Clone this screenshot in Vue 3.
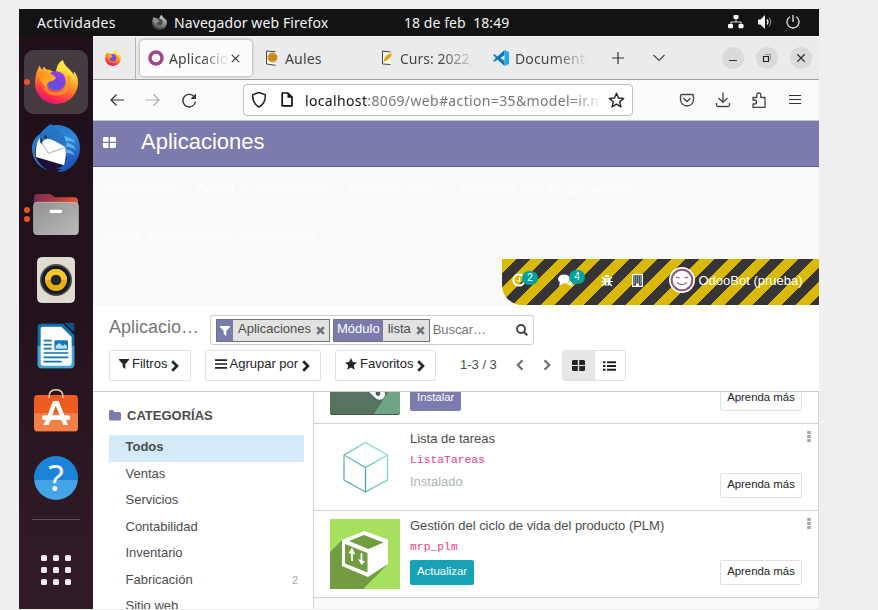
<script setup>
const menuRows = [
  ['Aplicaciones', 'Tienda de aplicaciones', 'Actualizaciones', 'Actualizar lista de aplicaciones'],
  ['Aplicar actualizaciones programadas'],
]
const categories = [
  { name: 'Todos', active: true },
  { name: 'Ventas' },
  { name: 'Servicios' },
  { name: 'Contabilidad' },
  { name: 'Inventario' },
  { name: 'Fabricación', count: 2 },
  { name: 'Sitio web' },
]
</script>

<template>
  <div class="page">
    <svg class="defs" width="0" height="0" aria-hidden="true">
      <defs>
        <linearGradient id="fxBody" x1="0.75" y1="0.05" x2="0.35" y2="1">
          <stop offset="0" stop-color="#fff44f" />
          <stop offset="0.3" stop-color="#ffc233" />
          <stop offset="0.55" stop-color="#ff7a2c" />
          <stop offset="0.8" stop-color="#ff3547" />
          <stop offset="1" stop-color="#e0107a" />
        </linearGradient>
        <linearGradient id="fxGlobe" x1="0.8" y1="0" x2="0.2" y2="1">
          <stop offset="0" stop-color="#a33be8" />
          <stop offset="0.5" stop-color="#7542e5" />
          <stop offset="1" stop-color="#4a63d8" />
        </linearGradient>
        <linearGradient id="fxHead" x1="0" y1="0" x2="1" y2="0.4">
          <stop offset="0" stop-color="#ff8a1c" />
          <stop offset="1" stop-color="#ffb12a" />
        </linearGradient>
        <linearGradient id="tb" x1="0.2" y1="0" x2="0.8" y2="1">
          <stop offset="0" stop-color="#1c74c8" />
          <stop offset="0.5" stop-color="#2f86dd" />
          <stop offset="1" stop-color="#1b48ae" />
        </linearGradient>
        <linearGradient id="folderBack" x1="0" y1="0" x2="1" y2="0">
          <stop offset="0" stop-color="#7b2b55" />
          <stop offset="1" stop-color="#e6522a" />
        </linearGradient>
        <linearGradient id="folderFront" x1="0" y1="0" x2="1" y2="1">
          <stop offset="0" stop-color="#929292" />
          <stop offset="1" stop-color="#b9b9b9" />
        </linearGradient>
        <linearGradient id="tealEdge" x1="0" y1="1" x2="1" y2="0">
          <stop offset="0" stop-color="#3c9aa6" />
          <stop offset="1" stop-color="#8ee6e6" />
        </linearGradient>
        <symbol id="firefox" viewBox="0 0 127 130">
          <path fill="url(#fxBody)" d="M14 16C6 28 0 46 0 68c0 36 29 62 63 62 37 0 64-28 64-64 0-14-4-24-13-33l1 11C106 27 88 22 82 0 68 8 63 24 63 36c-8-1-14-2-19-7-6 0-13 0-17-10-3 3-4 7-4 10-5-3-8-8-9-13Z" />
          <path fill="#ffe23e" opacity=".8" d="M82 0c3 22 30 27 36 62-8-10-14-22-28-27-8-4-18-4-27 1 0-12 5-28 19-36Z" />
          <circle cx="62" cy="62" r="29" fill="url(#fxGlobe)" />
          <path fill="url(#fxHead)" d="M5 45c9-10 21-14 33-8 5 2 14 4 24 16-6 10-17 8-23 14-4 4-5 10-4 16C24 76 18 58 5 45Z" />
          <path fill="none" stroke="#ff9a25" stroke-width="9" stroke-linecap="round" opacity=".75" d="M99 50c8 23-5 49-34 51-14 0-27-5-34-17" />
        </symbol>
      </defs>
    </svg>

    <div class="screen">
      <header class="topbar">
        <span class="activities">Actividades</span>
        <svg class="gray-fox" width="15" height="15"><use href="#firefox" /></svg>
        <span class="appname">Navegador web Firefox</span>
        <span class="clock">18 de feb&nbsp; 18:49</span>
        <div class="tray">
          <svg width="16" height="14" viewBox="0 0 16 14"><path d="M3 9V7h10v2M8 4v3" fill="none" stroke="#ddd" /><rect x="5.500" y="0" width="5" height="4" rx="1" fill="#fff" /><rect x="0" y="9" width="5" height="4.300" rx="1" fill="#fff" /><rect x="10.500" y="9" width="5" height="4.300" rx="1" fill="#fff" /></svg>
          <svg width="16" height="14" viewBox="0 0 16 14"><path d="M1 4.500h2.500L8 0v14L3.500 9.500H1Z" fill="#f4f4f4" /><path d="M10 4.500q2 2.500 0 5" fill="none" stroke="#eee" stroke-width="1.300" /><path d="M12 2.500q3.400 4.500 0 9" fill="none" stroke="#888" stroke-width="1.100" /></svg>
          <svg width="14" height="14" viewBox="0 0 14 14"><path d="M4 1.800a6 6 0 1 0 6 0M7 0v7" fill="none" stroke="#e6e6e6" stroke-width="1.300" /></svg>
        </div>
      </header>

      <div class="body">
        <nav class="dock">
          <div class="slot">
            <i class="dots"><b></b></i>
            <div class="tile"><svg width="43" height="44"><use href="#firefox" /></svg></div>
          </div>
          <div class="slot">
            <svg width="48" height="48" viewBox="0 0 144 144">
              <path fill="#1d1034" d="M10 96q14 36 56 46l40-12V90Z" />
              <path fill="url(#tb)" d="M24 30C38 12 46 8 56 0l6 4c46-6 82 26 82 68 0 36-26 66-56 72l-14-2 16-6-20-4C96 132 102 116 104 98L26 42C10 62 6 80 10 98q12 28 42 42C20 132 0 104 0 72 0 54 10 38 24 30Z" />
              <path fill="#fff" d="M22 42q10-8 24-2l54 28q4 32-4 56L12 99Q8 70 22 42Z" />
              <path d="M25 50l24 38 52-18" fill="none" stroke="#9c9c9c" stroke-width="2.500" />
              <path fill="#2872c2" d="M24 34c12-14 34-18 54-12 16 6 26 24 24 48C86 58 64 44 44 45 34 47 30 54 29 62 23 54 22 44 24 34Z" />
              <path fill="#7fd0f6" opacity=".65" d="M96 36c18 5 28 10 35 20-12-6-20-6-30-6ZM103 56c18 4 26 10 30 22-9-7-18-9-29-10ZM104 76c14 3 21 10 24 19-8-6-15-8-25-8Z" />
              <circle cx="40" cy="39" r="5" fill="#28384f" />
              <path fill="#263a55" d="M27 39l-4 18 10-7Z" />
            </svg>
          </div>
          <div class="slot">
            <i class="dots"><b></b><b></b></i>
            <svg width="46" height="42" viewBox="0 0 138 126">
              <path fill="url(#folderBack)" d="M3 14Q3 3 14 3h36q6 0 10 6 3 4 9 4h54q12 0 12 12v50H3Z" />
              <rect x="2" y="28" width="134" height="97" rx="11" fill="url(#folderFront)" stroke="#cfcfcf" stroke-width="2" />
              <rect x="50" y="50" width="37" height="10" rx="4" fill="#fff" />
            </svg>
          </div>
          <div class="slot">
            <svg width="38" height="46" viewBox="0 0 114 138">
              <rect x="2" y="2" width="110" height="134" rx="11" fill="#e0dbcf" stroke="#f3f0e8" stroke-width="3" />
              <circle cx="57" cy="69" r="48" fill="#494e52" />
              <circle cx="57" cy="69" r="43" fill="#171b20" />
              <circle cx="57" cy="69" r="33" fill="#e9ad13" />
              <path d="M57 36a33 33 0 0 1 33 33H24a33 33 0 0 1 33-33" fill="#f7c72c" />
              <circle cx="57" cy="69" r="16" fill="#24282b" />
            </svg>
          </div>
          <div class="slot">
            <svg width="38" height="46" viewBox="0 0 114 138">
              <path fill="#0e70ad" d="M14 2h64l34 34v88q0 12-12 12H14Q2 136 2 124V14Q2 2 14 2Z" />
              <path fill="#41a3d8" d="M2 69h110v55q0 12-12 12H14Q2 136 2 124Z" />
              <path fill="#fff" d="M17 11h56l31 31v78q0 8-8 8H19q-8 0-8-8V18q0-7 6-7Z" />
              <path fill="#0a5688" d="M82 0h30v28Z" />
              <path d="M20 53h24M20 65h24M20 77h24M20 90h74M20 103h74M20 116h54" stroke="#1172b0" stroke-width="5" />
              <rect x="52" y="52" width="41" height="29" rx="4" fill="#1679b6" />
              <path fill="#b5e1f5" d="M56 77V68l11-8 10 9 7-5 6 5v8Z" />
            </svg>
          </div>
          <div class="slot bag">
            <svg width="46" height="44" viewBox="0 0 138 132">
              <rect x="3" y="21" width="132" height="109" rx="11" fill="#ef5c20" />
              <path fill="#f38047" d="M3 76h132v43q0 11-11 11H14Q3 130 3 119Z" />
              <path d="M48 30v-4q0-21 21-21t21 21v4" fill="none" stroke="#f2d6a1" stroke-width="4.500" />
              <path fill="#fff" fill-rule="evenodd" d="M60 39h17l17 43h9q8 0 8 7t-8 7h-4l6 15H91l-6-15H53l-6 15H31l8-15h-4q-8 0-8-7t8-7h9Zm8 14L58 82h22Z" />
            </svg>
          </div>
          <div class="slot">
            <div class="help">?</div>
          </div>
          <div class="dock-line"></div>
          <div class="dock-grid"><i v-for="n in 9" :key="n"></i></div>
        </nav>

        <main class="browser">
          <div class="tabs">
            <div class="pinned"><svg width="16" height="16"><use href="#firefox" /></svg></div>
            <div class="tab active">
              <svg width="16" height="16" viewBox="0 0 16 16"><circle cx="8" cy="8" r="6" fill="none" stroke="#a24689" stroke-width="3.500" /></svg>
              <span class="fade t1">Aplicaciones</span>
              <svg class="close" width="9" height="9" viewBox="0 0 9 9"><path d="M.8.8l7.400 7.400M8.200.8L.8 8.200" stroke="#333" stroke-width="1.100" /></svg>
            </div>
            <div class="tab aules">
              <svg width="14" height="16" viewBox="0 0 14 16"><path d="M1.500 1l9 .7M1.500 1v13l9 1.300" fill="#fff" stroke="#444" /><circle cx="7.500" cy="7.500" r="5" fill="#d49a24" /><path d="M4 6h7M4 9h7" stroke="#845813" stroke-dasharray="1.500 1" /></svg>
              <span>Aules</span>
            </div>
            <div class="tab curs">
              <svg width="14" height="16" viewBox="0 0 14 16"><path d="M9.500 2L1.500 1v13l8 .5" fill="#fff" stroke="#444" /><path d="M3 11q0-7 8-8-1 7-8 8Z" fill="#f3b619" /><path d="M2.500 12L9 5" stroke="#c87c12" /></svg>
              <span class="fade t2">Curs: 2022_</span>
            </div>
            <div class="tab docs">
              <svg width="16" height="16" viewBox="0 0 16 16"><path d="M11.500 0L4.500 6.500 1.500 4.200 0 5l3 3-3 3 1.500.8 3-2.300 7 6.500V11L7.500 8l4-3Z" fill="#0779bd" /><path d="M11.500 0L16 2v12l-4.500 2Z" fill="#27a5ee" /></svg>
              <span class="fade t3">Documenta</span>
            </div>
            <svg class="plus" width="12" height="12" viewBox="0 0 12 12"><path d="M6 0v12M0 6h12" stroke="#333" stroke-width="1.200" /></svg>
            <svg class="down" width="12" height="8" viewBox="0 0 12 8"><path d="M.5 1L6 6.500 11.500 1" fill="none" stroke="#444" stroke-width="1.200" /></svg>
            <div class="win">
              <i><svg width="10" height="10"><path d="M1 7.500h8" stroke="#333" /></svg></i>
              <i><svg width="10" height="10"><path d="M1.500 3.500h5v5h-5Z" fill="none" stroke="#222" stroke-width="1.200" /><path d="M3 1.500h5.500V7" fill="none" stroke="#999" /></svg></i>
              <i><svg width="10" height="10"><path d="M1.300 1.300l7.400 7.400M8.700 1.300L1.300 8.700" stroke="#333" stroke-width="1.300" /></svg></i>
            </div>
          </div>

          <div class="toolbar">
            <div class="navicons">
              <svg width="16" height="16" viewBox="0 0 16 16"><path d="M15 8H2M7.500 2.500L2 8l5.500 5.500" fill="none" stroke="#333" stroke-width="1.200" /></svg>
              <svg width="16" height="16" viewBox="0 0 16 16"><path d="M1 8h13M8.500 2.500L14 8l-5.500 5.500" fill="none" stroke="#aaa" stroke-width="1.200" /></svg>
              <svg width="16" height="16" viewBox="0 0 16 16"><path d="M14.500 9.500A6.300 6.300 0 1 1 12.500 4" fill="none" stroke="#333" stroke-width="1.400" /><path d="M15 1.500v5.500H9.500Z" fill="#333" /></svg>
            </div>
            <div class="url">
              <svg width="16" height="18" viewBox="0 0 16 18"><path d="M8 1.500l6.300 2.200q.5 8.500-6.300 12.500Q1.200 12.200 1.700 3.700Z" fill="none" stroke="#222" stroke-width="1.500" stroke-linejoin="round" /></svg>
              <svg width="14" height="16" viewBox="0 0 14 16"><path d="M2.200 1h5.600L12 5.200v8.600H2.200Z" fill="none" stroke="#111" stroke-width="1.700" stroke-linejoin="round" /><path d="M7.500 1v4.800H12Z" fill="#111" /></svg>
              <span class="fade address"><b>localhost</b>:8069/web#action=35&amp;model=ir.module</span>
              <svg width="17" height="17" viewBox="0 0 17 17"><path d="M8.500 1.300l2 4.700 5.200.4-4 3.400 1.300 5.100-4.500-2.800L4 14.900l1.300-5.100-4-3.400L6.500 6Z" fill="none" stroke="#222" stroke-width="1.400" stroke-linejoin="round" /></svg>
            </div>
            <div class="tools">
              <svg width="16" height="16" viewBox="0 0 16 16"><path d="M3 2.500h10q1.500 0 1.500 1.500v3.500a6.500 6.500 0 0 1-13 0V4Q1.500 2.500 3 2.500Z" fill="none" stroke="#444" stroke-width="1.300" /><path d="M4.500 6.200L8 9.500l3.500-3.300" fill="none" stroke="#444" stroke-width="1.500" /></svg>
              <svg width="16" height="16" viewBox="0 0 16 16"><path d="M8 .5V10M3.500 6L8 10.300 12.500 6M1.500 11v2q0 1.500 1.500 1.500h10q1.500 0 1.500-1.500v-2" fill="none" stroke="#444" stroke-width="1.300" /></svg>
              <svg width="16" height="16" viewBox="0 0 16 16"><path d="M2 8V5.500h3.800V3q0-2 2-2t2 2v2.500H14v9.800H2V12h1.500q2 0 2-2t-2-2Z" fill="none" stroke="#444" stroke-width="1.300" stroke-linejoin="round" /></svg>
              <svg width="16" height="16" viewBox="0 0 16 16"><path d="M2 3.500h12M2 7.500h12M2 11.500h12" stroke="#333" stroke-width="1.200" /></svg>
            </div>
          </div>

          <div class="odoo-nav">
            <svg width="13" height="11" viewBox="0 0 13 11"><path fill="#fff" d="M1 0h4.500v4.800H0V1ZM7 0h5l1 1v3.800H7ZM0 6h5.500v5H1l-1-1ZM7 6h6v4l-1 1H7Z" /></svg>
            <span>Aplicaciones</span>
          </div>

          <div class="menus">
            <div v-for="(row, i) in menuRows" :key="i" class="menu-row">
              <span v-for="m in row" :key="m">{{ m }}</span>
            </div>
            <div class="systray">
              <div class="sys clocki">
                <svg width="14" height="14" viewBox="0 0 14 14"><circle cx="7" cy="7" r="5.600" fill="none" stroke="#fff" stroke-width="2" /><path d="M7.500 4v4H4.500" fill="none" stroke="#fff" stroke-width="1.200" /></svg>
                <em>2</em>
              </div>
              <div class="sys chati">
                <svg width="15" height="13" viewBox="0 0 15 13"><ellipse cx="6" cy="5" rx="6" ry="4.600" fill="#fff" /><path fill="#fff" d="M2 8L1 12l5-3ZM8 10q5-1 5.500-6 3 3 0 6l1.500 3-4-2Z" /></svg>
                <em>4</em>
              </div>
              <svg class="bug" width="12" height="13" viewBox="0 0 12 13"><path fill="#fff" d="M3.500 3a2.500 2.500 0 0 1 5 0ZM2.500 4h3v8Q2.500 11.500 2.500 8ZM6.500 4h3v4q0 3.500-3 4Z" /><path d="M0 7.500h12M1 3l2 2M11 3L9 5M1 12l2-2M11 12l-2-2" stroke="#fff" stroke-width="1.200" /></svg>
              <svg class="building" width="11" height="13" viewBox="0 0 11 13"><rect x=".6" y=".6" width="9.800" height="11.800" fill="#49555a" stroke="#fff" stroke-width="1.200" /><path d="M2 3h7M2 5h7M2 7h7M2 9h7" stroke="#bac8ce" stroke-dasharray="1 1" /><path d="M4 12V9.500h3V12" fill="#fff" /></svg>
              <svg class="face" width="26" height="26" viewBox="0 0 26 26"><circle cx="13" cy="13" r="13" fill="#fff" /><circle cx="13" cy="13" r="10.300" fill="#fff" stroke="#875a7b" stroke-width="2" /><path d="M7 11q1.500-1.500 3.500 0M15.500 11q1.500-1.500 3.500 0M8 15.500q5 4 10 0" fill="none" stroke="#875a7b" stroke-width="1.200" /></svg>
              <span class="user">OdooBot (prueba)</span>
            </div>
          </div>

          <section class="control">
            <div class="crow first">
              <h1>Aplicacio…</h1>
              <div class="search">
                <div class="facet">
                  <span class="flabel icon"><svg width="10" height="10" viewBox="0 0 10 10"><path fill="#fff" d="M0 0h10v1L6.300 5v5L3.700 8V5L0 1Z" /></svg></span>
                  <span class="fval">Aplicaciones</span>
                  <svg class="fx" width="9" height="9" viewBox="0 0 9 9"><path d="M1.200 1.200l6.600 6.600M7.800 1.200L1.200 7.800" stroke="#6c757d" stroke-width="2.600" /></svg>
                </div>
                <div class="facet">
                  <span class="flabel">Módulo</span>
                  <span class="fval narrow">lista</span>
                  <svg class="fx" width="9" height="9" viewBox="0 0 9 9"><path d="M1.200 1.200l6.600 6.600M7.800 1.200L1.200 7.800" stroke="#6c757d" stroke-width="2.600" /></svg>
                </div>
                <span class="ph">Buscar…</span>
                <svg class="mag" width="12" height="12" viewBox="0 0 12 12"><circle cx="5" cy="5" r="4" fill="none" stroke="#444" stroke-width="1.900" /><path d="M8 8l3.300 3.300" stroke="#444" stroke-width="2.200" /></svg>
              </div>
            </div>
            <div class="crow second">
              <button class="opt filters"><svg width="10" height="10" viewBox="0 0 10 10"><path fill="#212529" d="M0 0h10v1L6.300 5v5L3.700 8V5L0 1Z" /></svg><span>Filtros</span><svg class="chev" width="8" height="12" viewBox="0 0 8 12"><path d="M1.200 1.200L6 6l-4.800 4.800" fill="none" stroke="#212529" stroke-width="2.700" /></svg></button>
              <button class="opt group"><svg width="12" height="10" viewBox="0 0 12 10"><path d="M0 1.200h12M0 5h12M0 8.800h12" stroke="#212529" stroke-width="1.700" /></svg><span>Agrupar por</span><svg class="chev" width="8" height="12" viewBox="0 0 8 12"><path d="M1.200 1.200L6 6l-4.800 4.800" fill="none" stroke="#212529" stroke-width="2.700" /></svg></button>
              <button class="opt favs"><svg width="12" height="12" viewBox="0 0 12 12"><path fill="#212529" d="M6 0l1.800 4 4.200.4-3.200 2.900.9 4.400L6 9.500l-3.700 2.200.9-4.400L0 4.400 4.200 4Z" /></svg><span>Favoritos</span><svg class="chev" width="8" height="12" viewBox="0 0 8 12"><path d="M1.200 1.200L6 6l-4.800 4.800" fill="none" stroke="#212529" stroke-width="2.700" /></svg></button>
              <span class="pager">1-3 / 3</span>
              <svg class="pprev" width="8" height="12" viewBox="0 0 8 12"><path d="M6.500 1.200L1.800 6l4.700 4.800" fill="none" stroke="#6c757d" stroke-width="2.300" /></svg>
              <svg class="pnext" width="8" height="12" viewBox="0 0 8 12"><path d="M1.500 1.200L6.200 6l-4.700 4.800" fill="none" stroke="#6c757d" stroke-width="2.300" /></svg>
              <div class="views">
                <i class="on"><svg width="13" height="11" viewBox="0 0 13 11"><path fill="#212529" d="M1 0h4.800v4.900H0V1ZM7.200 0H12l1 1v3.900H7.200ZM0 6.100h5.800V11H1l-1-1ZM7.200 6.100H13V10l-1 1H7.200Z" /></svg></i>
                <i><svg width="13" height="10" viewBox="0 0 13 10"><path d="M0 1.200h2.500M0 5h2.500M0 8.800h2.500M4 1.200h9M4 5h9M4 8.800h9" stroke="#212529" stroke-width="2" /></svg></i>
              </div>
            </div>
          </section>

          <div class="content">
            <aside class="side">
              <div class="side-title"><svg width="12" height="11" viewBox="0 0 12 11"><path fill="#7c7bad" d="M1.500 0H4l1.200 2H10.500Q12 2 12 3.500v5.500Q12 10.500 10.500 10.500h-9Q0 10.500 0 9V1.500Q0 0 1.500 0Z" /></svg><span>CATEGORÍAS</span></div>
              <div v-for="c in categories" :key="c.name" class="cat" :class="{ sel: c.active }">
                <span>{{ c.name }}</span><small v-if="c.count">{{ c.count }}</small>
              </div>
            </aside>

            <div class="kanban">
              <article class="card cut">
                <svg class="thumb" width="70" height="70" viewBox="0 0 70 70"><rect width="70" height="70" rx="3" fill="#6da585" /><path d="M0 20L52 38 59 46 43 70H3Q0 70 0 67Z" fill="#56735f" /><path d="M0 67q0 3 3 3h64q3 0 3-3v-1q0 3-3 3H3q-3 0-3-3Z" fill="#3c5749" /><path d="M37 45l8 7.500q4 4 8 1t0-10" fill="#fff" /><circle cx="48" cy="48.500" r="2.400" fill="#45634f" /></svg>
                <div class="info"><span class="btn install">Instalar</span></div>
                <span class="btn learn">Aprenda más</span>
              </article>
              <article class="card">
                <svg class="thumb" width="70" height="70" viewBox="0 0 70 70"><g fill="none" stroke="url(#tealEdge)" stroke-width="1.200" stroke-linejoin="round"><path d="M35.500 10.500l22 12.500v25l-22 12-21.500-12V23Z" /><path d="M14 23l21.500 12.500 22-12.500" /></g><path d="M35.500 35.500V60" stroke="#4aa5ad" stroke-width="1.300" /><path d="M35.500 11v24M14 48l21.500-12 22 12" fill="none" stroke="#d5eff0" stroke-width=".8" stroke-dasharray="2 1.500" /></svg>
                <div class="info">
                  <h3>Lista de tareas</h3>
                  <code>ListaTareas</code>
                  <span class="installed">Instalado</span>
                </div>
                <span class="btn learn">Aprenda más</span>
                <span class="kebab"><i></i><i></i><i></i></span>
              </article>
              <article class="card">
                <svg class="thumb" width="70" height="70" viewBox="0 0 70 70"><rect width="70" height="70" fill="#a5e05f" /><path d="M12 21L0 33v37h33l25-25Z" fill="#729c42" /><path d="M34.500 12L58 20.500V45L38 58 12 47V21Z" fill="#fff" /><path d="M34 16l19.500 7.500L38.500 30 19 22Z" fill="#729c42" /><path d="M15 25l22.500 9v19.500L15 44.500Z" fill="#729c42" /><path d="M22 42V32M31.500 34v9" stroke="#fff" stroke-width="1.800" /><path d="M18.500 34l3.500-5.500 3.500 7ZM28 40l3.500 6 3.500-3.500Z" fill="#fff" /></svg>
                <div class="info">
                  <h3>Gestión del ciclo de vida del producto (PLM)</h3>
                  <code>mrp_plm</code>
                  <span class="btn update">Actualizar</span>
                </div>
                <span class="btn learn">Aprenda más</span>
                <span class="kebab"><i></i><i></i><i></i></span>
              </article>
            </div>
          </div>
        </main>
      </div>
    </div>
  </div>
</template>

<style>
body { background: #efefef; overflow: hidden; }
</style>

<style scoped>
* { box-sizing: border-box; }
.page { width: 878px; height: 610px; padding: 9px 59px 1px 19px; background: #efefef; overflow: hidden; font-family: "Liberation Sans", Arial, sans-serif; font-size: 13px; color: #4c4c4c; }
.page svg { display: block; flex: none; }
.page .defs { position: absolute; }
.screen { width: 800px; height: 600px; overflow: hidden; display: flex; flex-direction: column; background: #fff; }
.topbar { height: 27px; flex: none; background: #131313; color: #f2f2f2; display: flex; align-items: center; padding: 0 19px 1px 18px; font-family: "Noto Sans", "Open Sans", sans-serif; font-size: 14px; white-space: nowrap; }
.activities { width: 115px; letter-spacing: .37px; }
.gray-fox { filter: grayscale(1) brightness(.85); margin-right: 7px; }
.appname { width: 230px; letter-spacing: .09px; }
.clock { width: 120px; letter-spacing: .07px; }
.tray { margin-left: auto; display: flex; gap: 13px; align-items: center; }
.body { display: flex; flex: 1; min-height: 0; }
.dock { width: 74px; flex: none; padding-top: 13px; background: linear-gradient(#20101a, #22121b 45%, #301a26 90%); display: flex; flex-direction: column; align-items: center; }
.slot { width: 74px; height: 66px; flex: none; display: flex; align-items: center; justify-content: center; position: relative; }
.slot.bag { padding-bottom: 5px; }
.tile { width: 64px; height: 64px; border-radius: 10px; background: #473b42; display: flex; align-items: center; justify-content: center; }
.dots { position: absolute; left: 5px; top: 0; height: 66px; display: flex; flex-direction: column; justify-content: center; gap: 3px; }
.dots b { width: 6px; height: 6px; border-radius: 50%; background: #e95420; }
.help { width: 44px; height: 44px; border-radius: 50%; background: linear-gradient(#1d83d8 0 54%, #43a3e5 54%); color: #fff; font: 36px/43px "Noto Sans", sans-serif; text-align: center; }
.dock-line { width: 48px; height: 1px; flex: none; background: #5e4f57; margin: 8px 0 35px; }
.dock-grid { display: grid; grid-template-columns: repeat(3, 6px); gap: 6px; }
.dock-grid i { width: 6px; height: 6px; border-radius: 1.500px; background: #f0eeef; }
.browser { flex: 1; min-width: 0; display: flex; flex-direction: column; background: #f9f9f9; }
.tabs { height: 44px; flex: none; background: #ebebeb; border-top: 1px solid #f8f8f8; border-bottom: 1px solid #a0a0a0; display: flex; align-items: center; font: 14px "Noto Sans", "Open Sans", sans-serif; letter-spacing: .15px; color: #444; white-space: nowrap; }
.pinned { width: 43px; height: 42px; border-right: 1px solid #b4b4b4; display: flex; align-items: center; padding-left: 12px; }
.tab { display: flex; align-items: center; height: 36px; }
.tab.active { width: 112px; margin-left: 4px; background: #fcfcfc; border-radius: 4px; box-shadow: 0 0 3px #8a8a8a; padding-left: 8px; }
.fade { overflow: hidden; -webkit-mask-image: linear-gradient(90deg, #000 55%, transparent); mask-image: linear-gradient(90deg, #000 55%, transparent); }
.t1 { width: 60px; margin-left: 5px; }
.close { margin-left: 2px; }
.aules { margin-left: 13px; width: 116px; gap: 6px; }
.curs { width: 113px; gap: 5px; }
.fade.t2 { width: 76px; letter-spacing: 0; }
.docs { width: 95px; gap: 6px; margin-left: -1px; }
.t3 { width: 74px; }
.plus { margin-left: 24px; }
.down { margin-left: 29px; }
.win { margin-left: auto; padding-right: 7px; display: flex; gap: 12px; }
.win i { width: 22px; height: 22px; border-radius: 50%; background: #dadada; display: flex; align-items: center; justify-content: center; }
.toolbar { height: 41px; flex: none; background: #fbfbfb; border-bottom: 1px solid #c4c4c4; display: flex; align-items: center; }
.navicons { width: 150px; padding-left: 16px; display: flex; gap: 20px; }
.url { width: 390px; height: 32px; background: #fff; border: 1px solid #bdbdbd; border-radius: 4px; display: flex; align-items: center; padding: 0 6px 0 7px; font: 14px "Noto Sans", "Open Sans", sans-serif; letter-spacing: .35px; color: #777; white-space: nowrap; }
.url svg:nth-child(2) { margin-left: 13px; }
.address { width: 297px; margin: 0 6px 0 11px; -webkit-mask-image: linear-gradient(90deg, #000 90%, transparent); mask-image: linear-gradient(90deg, #000 90%, transparent); }
.address b { font-weight: 400; color: #111; }
.tools { margin-left: auto; padding-right: 16px; display: flex; gap: 20px; }
.odoo-nav { height: 46px; flex: none; background: #7c7bad; border-bottom: 1px solid #5f5e97; display: flex; align-items: center; padding: 0 0 3px 10px; color: #fff; font-size: 22px; }
.odoo-nav span { margin-left: 25px; }
.menus { height: 138px; flex: none; background: #f9f9f9; color: #fff; }
.menu-row { height: 46px; padding: 0 10px; display: flex; gap: 20px; line-height: 44px; }
.systray { height: 46px; width: 317px; margin-left: auto; border-bottom-left-radius: 20px; background: repeating-linear-gradient(135deg, #d9b904, #d9b904 10px, #373435 10px, #373435 20px); display: flex; align-items: center; padding: 0 0 4px 10px; }
.sys { display: flex; position: relative; height: 14px; align-items: center; }
.sys em { position: absolute; left: 10px; top: -2px; width: 16px; height: 14px; border-radius: 7px; background: #00a09d; font: 10px/13px "Liberation Sans", sans-serif; text-align: center; }
.clocki { width: 46px; }
.chati { width: 41px; }
.chati em { left: 11px; top: -3px; }
.bug { margin-left: 2px; }
.building { margin-left: 19px; }
.face { margin-left: 26px; }
.user { margin-left: 3.500px; white-space: nowrap; }
.control { height: 87px; flex: none; background: #fff; border-bottom: 1px solid #ccc; padding: 10px 16px 0; }
.crow { display: flex; align-items: center; }
.first { height: 30px; }
h1 { width: 101px; margin: 0; font-weight: 400; font-size: 18px; line-height: 24px; color: #777; padding-bottom: 7px; }
.search { width: 324px; height: 30px; border: 1px solid #ccc; border-radius: 3px; display: flex; align-items: center; padding: 0 5px; }
.facet { height: 23px; border: 1px solid #6c757d; background: #e2e2e0; display: flex; align-items: center; margin-right: 3px; padding-right: 4px; line-height: 18px; }
.flabel { background: #7c7bad; color: #fff; height: 21px; padding: 0 3px; }
.flabel.icon { width: 16px; padding: 6px 3px 0; }
.fval { height: 21px; padding: 0 5px; width: 83px; color: #4c4c4c; }
.fval.narrow { width: 33px; }
.fx { position: relative; top: 0; }
.ph { color: #757575; padding-bottom: 1px; }
.mag { margin-left: auto; }
.second { margin-top: 5px; height: 31px; }
.opt { height: 31px; background: #fff; border: 1px solid #dee2e6; border-radius: 2px; display: flex; align-items: center; padding: 0 0 4px 9px; font: 13px "Liberation Sans", sans-serif; color: #212529; white-space: nowrap; }
.opt span { margin: 0 4px 0 3px; }
.chev { position: relative; top: 2px; }
.filters { width: 82px; margin-right: 14px; }
.group { width: 116px; margin-right: 14px; padding-left: 8.500px; }
.favs { width: 101px; padding-left: 9px; }
.pager { width: 56px; margin-left: 24px; padding-bottom: 3px; }
.pprev, .pnext { position: relative; top: -1px; }
.pnext { margin-left: 19px; }
.views { margin-left: 11px; width: 64px; height: 31px; border: 1px solid #dee2e6; border-radius: 3px; display: flex; }
.views i { flex: 1; display: flex; align-items: center; justify-content: center; }
.views .on { background: #e6e6e6; border-right: 1px solid #dee2e6; }
.content { flex: 1; min-height: 0; display: flex; overflow: hidden; }
.side { width: 220px; flex: none; background: #fff; padding: 12px 9px 0 16px; }
.side-title { display: flex; align-items: center; gap: 6px; height: 23px; font-weight: 700; margin-bottom: 8px; }
.cat { height: 26.500px; line-height: 24px; padding: 0 6px 0 16.500px; display: flex; justify-content: space-between; }
.cat.sel { background: #d3ebf8; font-weight: 700; }
.cat small { color: #aaa; font-size: 11px; }
.kanban { flex: 1; border-left: 1px solid #ced4da; overflow: hidden; }
.card { height: 87px; background: #fff; border-bottom: 1px solid #ced4da; border-right: 1px solid #ced4da; display: flex; padding: 8px 16px; gap: 10px; position: relative; }
.card.cut { height: 32px; overflow: hidden; align-items: flex-end; }
.info { flex: 1; display: flex; flex-direction: column; align-items: flex-start; }
h3 { margin: 0; font-size: 13px; font-weight: 400; line-height: 13px; white-space: nowrap; letter-spacing: -.02px; }
code { font: 11.370px/13px "Liberation Mono", monospace; color: #e83e8c; margin-top: 9px; }
.installed { color: #adb5bd; margin-top: 7px; line-height: 15px; }
.btn { font-size: 11.400px; line-height: 21px; height: 25px; padding: 0 6px; border: 1px solid; border-radius: 2px; white-space: nowrap; }
.update { margin-top: 6px; background: #17a2b8; border-color: #17a2b8; color: #fff; }
.install { background: #7c7bad; border-color: #7c7bad; color: #fff; margin-bottom: 4px; }
.learn { align-self: flex-end; border-color: #dee2e6; color: #212529; margin-bottom: 4px; background: #fff; width: 82px; text-align: center; }
.kebab { position: absolute; right: 7px; top: 7px; display: flex; flex-direction: column; gap: 1px; }
.kebab i { width: 4px; height: 3px; border-radius: 1px; background: #a8a8a8; }
</style>
